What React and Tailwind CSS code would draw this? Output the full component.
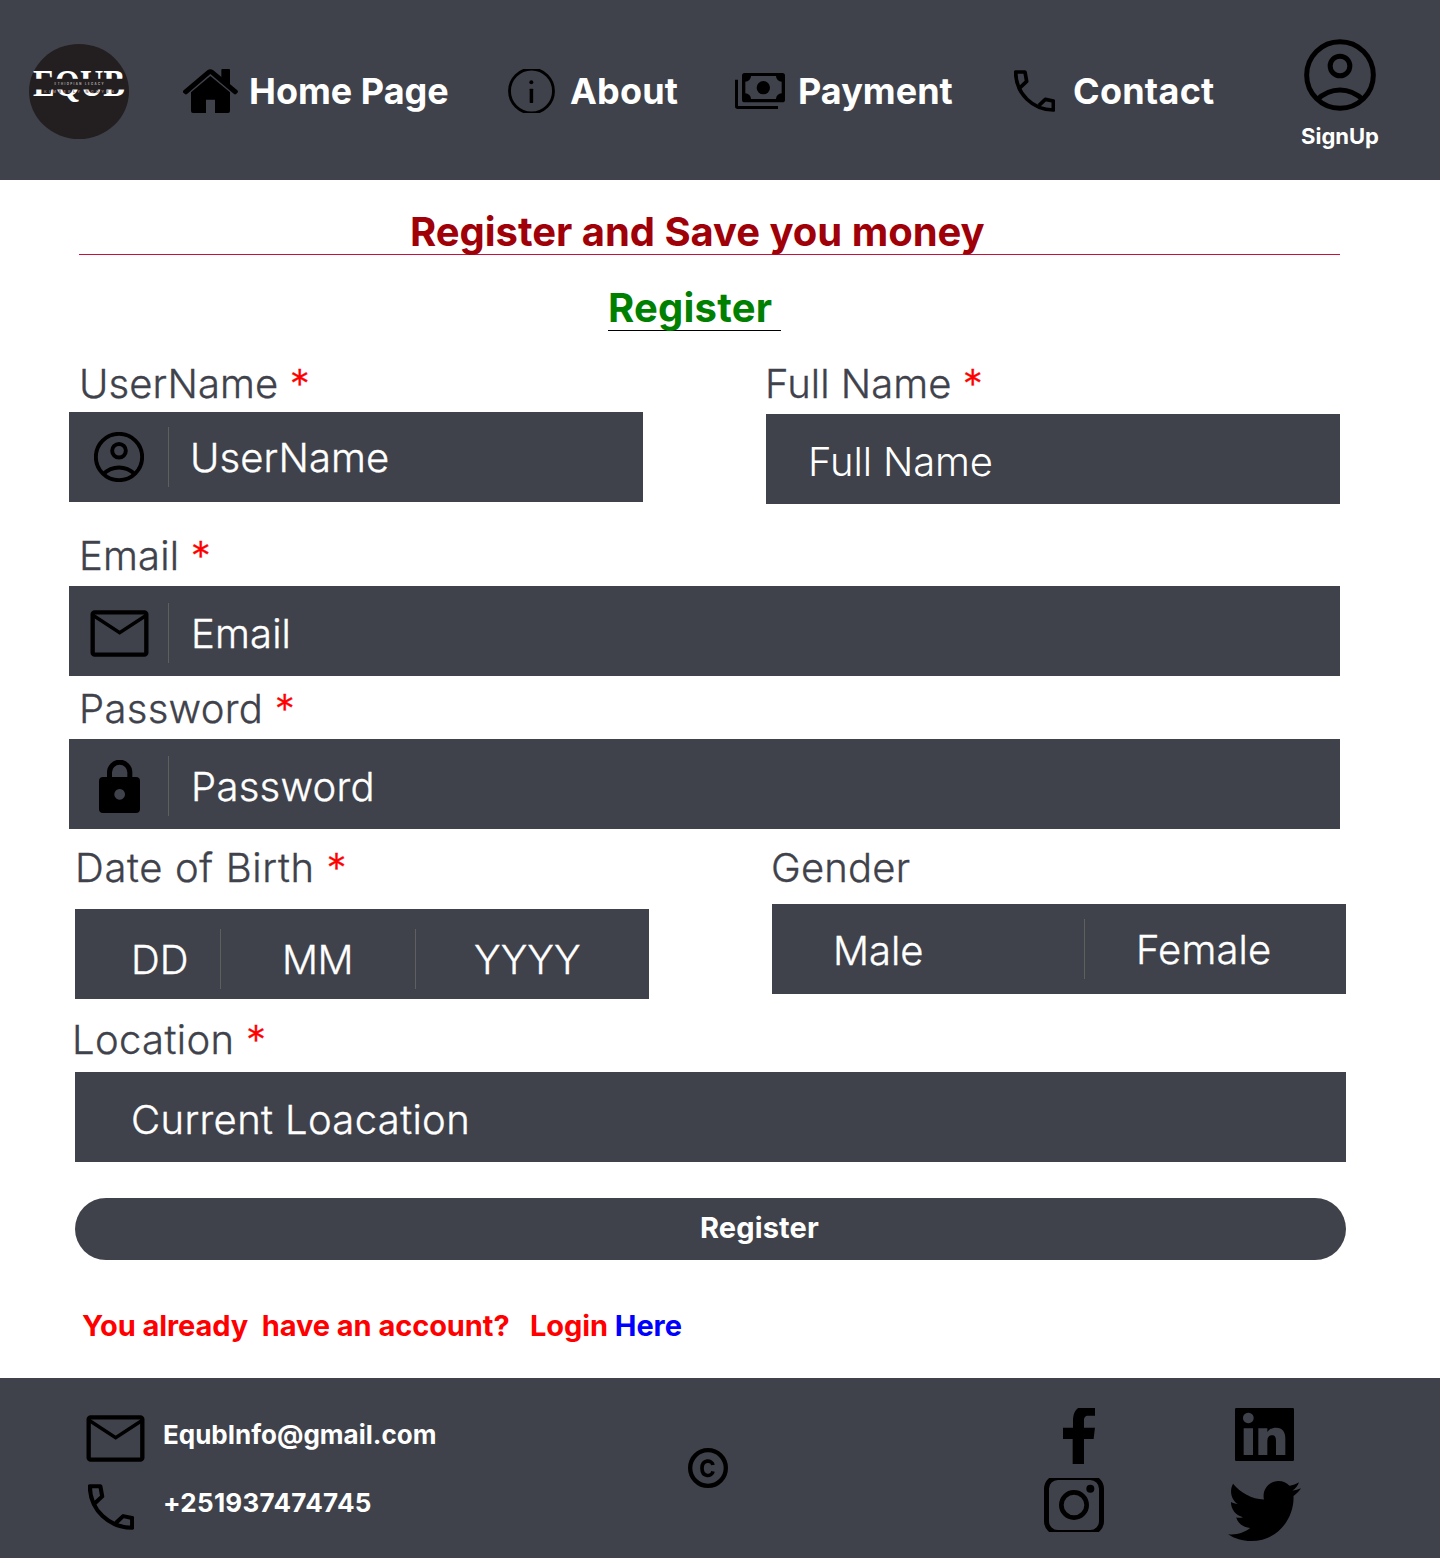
import React from "react";
import { FaTwitter } from "react-icons/fa";

const Svg = ({ vb, className = "", children }) => (
  <svg viewBox={vb} preserveAspectRatio="none" fill="black" className={"block shrink-0 " + className}>
    {children}
  </svg>
);

const UserIcon = ({ className, stroke = 15 }) => (
  <Svg vb="1032 57 216 216" className={className}>
    <g fill="none" stroke="black" strokeWidth={stroke}>
      <circle cx="1140" cy="165" r="100" />
      <circle cx="1140" cy="138" r="29.500" />
      <path d="M1070 240Q1102 210 1140 210T1210 240" />
    </g>
  </Svg>
);

const MailIcon = ({ className }) => (
  <Svg vb="90 90 177 141" className={className}>
    <g fill="none" stroke="black" strokeWidth="13">
      <rect x="98" y="97" width="161" height="127" rx="6" />
      <path d="M99 106L179 158L259 106" strokeWidth="10.500" />
    </g>
  </Svg>
);

const PhoneIcon = ({ className }) => (
  <Svg vb="162 150 123 126" className={className}>
    <path
      d="M181 202L200 184L195 156H167C167 222 220 270 280 270V243L256 238L237 256"
      fill="none"
      stroke="black"
      strokeWidth="11"
      strokeLinejoin="round"
    />
  </Svg>
);

const HomeIcon = ({ className }) => (
  <Svg vb="549 147 165 132" className={className}>
    <path d="M664 150Q664 147 667 147H687Q690 147 690 150V197L664 176Z" />
    <path d="M551 211L622 151Q631 144 640 151L712 211Q716 216 711 220Q706 226 701 221L631 162L562 221Q557 226 552 220Q546 216 551 211Z" />
    <path d="M631 168L690 217V273Q690 279 684 279H645V239H618V279H579Q573 279 573 273V217Z" />
  </Svg>
);

const InfoIcon = ({ className }) => (
  <Svg vb="83 147 141 132" className={className}>
    <circle cx="153.500" cy="213" r="66" fill="none" stroke="black" strokeWidth="8.500" />
    <circle cx="153" cy="187" r="6" />
    <rect x="148" y="206" width="10.500" height="43" rx="2" />
  </Svg>
);

const CashIcon = ({ className }) => (
  <Svg vb="765 159 150 108" className={className}>
    <path d="M765 179H774V258H894V267H773Q765 267 765 259Z" />
    <path
      fillRule="evenodd"
      d="M794 159H907Q915 159 915 167V239Q915 247 907 247H794Q786 247 786 239V167Q786 159 794 159ZM813 168A17 17 0 0 1 796 185V220A17 17 0 0 1 813 237H888A17 17 0 0 1 905 220V185A17 17 0 0 1 888 168Z"
    />
    <circle cx="850" cy="203" r="20" />
  </Svg>
);

const LockIcon = ({ className }) => (
  <Svg vb="117 540 123 159" className={className}>
    <path d="M148.500 598V577a30.500 30.500 0 0 1 61 0V598" fill="none" stroke="black" strokeWidth="15" />
    <path
      fillRule="evenodd"
      d="M129 591H228Q240 591 240 603V687Q240 699 228 699H129Q117 699 117 687V603Q117 591 129 591ZM179 627a16 16 0 1 0 .01 0Z"
    />
  </Svg>
);

const Logo = () => (
  <svg viewBox="29 44 100 95" className="block h-[95px] w-[100px] shrink-0">
    <ellipse cx="79" cy="91.500" rx="50" ry="47.500" fill="#231f20" />
    <text x="33" y="95.700" fontFamily="Liberation Serif" fontWeight="700" fontSize="37" textLength="92" lengthAdjust="spacingAndGlyphs" fill="white">EQUB</text>
    <rect x="31" y="78.800" width="96" height="10.700" fill="#231f20" />
    <text x="54.500" y="84.800" fontFamily="Inter" fontSize="2.800" textLength="49" fill="#b5b0b0">ETHIOPIAN LEGACY</text>
    <text x="44" y="92.600" fontFamily="Inter" fontSize="3.800" textLength="70" fill="#8d7270">KIMBERLY NGUYEN</text>
  </svg>
);

const Label = ({ className = "", required = true, children }) => (
  <label className={"block h-12 whitespace-pre text-[40px] leading-[48px] font-light [-webkit-text-stroke:0.35px_currentColor] text-[#40424b] " + className}>
    {children} {required && <span className="text-[#ff0000]">*</span>}
  </label>
);

const Rule = ({ className = "" }) => <div className={"h-[60px] w-px shrink-0 bg-[#5f5f5f] " + className} />;

const Value = ({ className = "", thin = false, children }) => (
  <span
    className={
      "h-12 whitespace-nowrap text-[40px] leading-[48px] font-light text-white " +
      (thin ? "" : "[-webkit-text-stroke:0.35px_currentColor] ") +
      className
    }
  >
    {children}
  </span>
);

export default function App() {
  return (
    <div className="h-[1558px] w-[1440px] overflow-hidden bg-white font-['Inter',sans-serif]">
      <header className="flex h-[180px] items-start bg-[#40424b] text-[36px] leading-[44px] font-bold text-white">
        <div className="mt-[44px] ml-[29px]"><Logo /></div>
        <nav className="flex items-start whitespace-nowrap">
          <a className="ml-[54px] flex w-[325px] pt-[69px]">
            <HomeIcon className="h-[44px] w-[55px]" />
            <span className="ml-[11px]">Home Page</span>
          </a>
          <a className="flex w-[227px] pt-[69px]">
            <InfoIcon className="h-[44px] w-[47px]" />
            <span className="ml-[15px] tracking-[0.2px]">About</span>
          </a>
          <a className="flex w-[279px] pt-[69px]">
            <CashIcon className="mt-[4px] h-[36px] w-[50px]" />
            <span className="ml-[13px]">Payment</span>
          </a>
          <a className="flex w-[287px] pt-[69px]">
            <PhoneIcon className="mt-px h-[42px] w-[41px]" />
            <span className="ml-[18px] tracking-[0.25px]">Contact</span>
          </a>
        </nav>
        <a className="mt-[39px] flex w-[78px] flex-col items-center">
          <UserIcon className="h-[72px] w-[72px]" />
          <span className="mt-[12px] text-[22px] leading-[27px]">SignUp</span>
        </a>
      </header>

      <main className="h-[1198px]">
        <h1 className="mr-[100px] ml-[79px] h-[75px] border-b border-[#c4123a] pt-[28px] pl-[331px] text-[40px] leading-[48px] font-bold tracking-[-0.03px] whitespace-nowrap text-[#a00008]">
          Register and Save you money
        </h1>
        <h2 className="mt-[28px] ml-[608px] h-[48px] w-[173px] border-b border-black text-[40px] leading-[50px] font-bold tracking-[0.22px] text-[#008000]">Register</h2>

        <form>
          <div className="ml-[69px] flex pt-[29px]">
            <div className="w-[697px]">
              <Label className="ml-[10px] tracking-[0.1px]">UserName</Label>
              <div className="mt-[4px] flex h-[90px] w-[574px] bg-[#40424b]">
                <UserIcon stroke={17} className="mt-[20px] ml-[25px] h-[50px] w-[50px]" />
                <Rule className="mt-[15px] ml-[24px]" />
                <Value className="mt-[22px] ml-[21px] tracking-[0.1px]">UserName</Value>
              </div>
            </div>
            <div className="w-[574px]">
              <Label className="-ml-px tracking-[0.03px]">Full Name</Label>
              <div className="mt-[6px] flex h-[90px] bg-[#40424b]">
                <Value thin className="mt-[24px] ml-[42px] tracking-[-0.15px]">Full Name</Value>
              </div>
            </div>
          </div>

          <div className="mt-[28px] ml-[69px] w-[1271px]">
            <Label className="ml-[10px] tracking-[0.2px]">Email</Label>
            <div className="mt-[6px] flex h-[90px] bg-[#40424b]">
              <MailIcon className="mt-[24px] ml-[21px] h-[47px] w-[59px]" />
              <Rule className="mt-[17px] ml-[19px]" />
              <Value className="mt-[24px] ml-[22px] tracking-[0.15px]">Email</Value>
            </div>
            <Label className="mt-[9px] ml-[10px] tracking-[0.3px]">Password</Label>
            <div className="mt-[6px] flex h-[90px] bg-[#40424b]">
              <LockIcon className="mt-[21px] ml-[30px] h-[53px] w-[41px]" />
              <Rule className="mt-[17px] ml-[28px]" />
              <Value className="mt-[24px] ml-[22px] tracking-[0.27px]">Password</Value>
            </div>
          </div>

          <div className="ml-[75px] flex pt-[15px]">
            <div className="w-[697px]">
              <Label className="tracking-[0.64px]">Date of Birth</Label>
              <div className="mt-[17px] flex h-[90px] w-[574px] bg-[#40424b]">
                <Value className="mt-[27px] ml-[56px] w-[89px]">DD</Value>
                <Rule className="mt-[20px]" />
                <Value className="mt-[27px] ml-[61px] w-[133px] tracking-[-0.5px]">MM</Value>
                <Rule className="mt-[20px]" />
                <Value className="mt-[27px] ml-[58px]">YYYY</Value>
              </div>
            </div>
            <div className="w-[574px]">
              <Label required={false} className="-ml-px tracking-[0.2px]">Gender</Label>
              <div className="mt-[12px] flex h-[90px] bg-[#40424b]">
                <Value className="mt-[23px] ml-[61px] w-[251px]">Male</Value>
                <Rule className="mt-[15px]" />
                <Value className="mt-[22px] ml-[51px] tracking-[0.15px]">Female</Value>
              </div>
            </div>
          </div>

          <div className="mt-[17px] ml-[75px] w-[1271px]">
            <Label className="-ml-[3px] tracking-[0.36px]">Location</Label>
            <div className="mt-[8px] flex h-[90px] bg-[#40424b]">
              <Value className="mt-[24px] ml-[56px] tracking-[0.36px]">Current Loacation</Value>
            </div>
            <button type="button" className="mt-[36px] flex h-[62px] w-full rounded-full bg-[#40424b] pt-[12px] pl-[625px] text-[29px] leading-[36px] font-bold tracking-[0.13px] text-white">
              Register
            </button>
          </div>
          <p className="mt-[48px] ml-[82px] text-[29px] leading-[36px] font-bold tracking-[-0.07px] whitespace-pre text-[#ff0000]">
            {"You already  have an account?   Login "}
            <a className="text-[#0000ff]">Here</a>
          </p>
        </form>
      </main>

      <footer className="flex h-[180px] items-start bg-[#40424b] text-[26px] leading-[32px] font-bold text-white">
        <div className="ml-[86px] w-[602px]">
          <div className="flex pt-[37px]">
            <MailIcon className="h-[47px] w-[59px]" />
            <span className="mt-[4px] ml-[18px]">EqubInfo@gmail.com</span>
          </div>
          <div className="mt-[22px] flex">
            <PhoneIcon className="ml-[2px] h-[46px] w-[46px]" />
            <span className="mt-[3px] ml-[29px] tracking-[0.27px]">+251937474745</span>
          </div>
        </div>
        <Svg vb="84 84 120 120" className="mt-[70px] h-[40px] w-[40px]">
          <circle cx="144" cy="144" r="53.500" fill="none" stroke="black" strokeWidth="13" />
          <path d="M159 135C156 119 126 117 126 145S156 171 159 154" fill="none" stroke="black" strokeWidth="11" />
        </Svg>
        <div className="mt-[30px] ml-[316px] w-[184px]">
          <Svg vb="128 54 97 168" className="ml-[18.700px] h-[56px] w-[32.300px]">
            <path d="M157 222V147H128V113H158V94C158 72 164 60 174 54H225V77H204C194 77 191 83 191 92V113H224L220 147H191V222Z" />
          </Svg>
          <Svg vb="72 264 180 162" className="mt-[14px] h-[54px] w-[60px]">
            <g fill="none" stroke="black">
              <rect x="79.500" y="262.500" width="165" height="165" rx="34" strokeWidth="15" />
              <circle cx="162" cy="345" r="38" strokeWidth="14" />
            </g>
            <circle cx="211" cy="296" r="12" />
          </Svg>
        </div>
        <div className="mt-[30px]">
          <Svg vb="645 54 177 159" className="ml-[7px] h-[53px] w-[59px]">
            <path
              fillRule="evenodd"
              d="M649 54H818Q822 54 822 58V209Q822 213 818 213H649Q645 213 645 209V58Q645 54 649 54ZM685 68a16 16 0 1 0 .01 0ZM671 115V195H699V115ZM715 115V195H742V153C742 142 747 136 756 136S768 142 768 153V195H796V147C796 126 788 113 768 113C757 113 748 117 742 126V115Z"
            />
          </Svg>
          <FaTwitter viewBox="0 48 512 416" preserveAspectRatio="none" className="mt-[20px] block h-[60px] w-[73px] text-black" />
        </div>
      </footer>
    </div>
  );
}
